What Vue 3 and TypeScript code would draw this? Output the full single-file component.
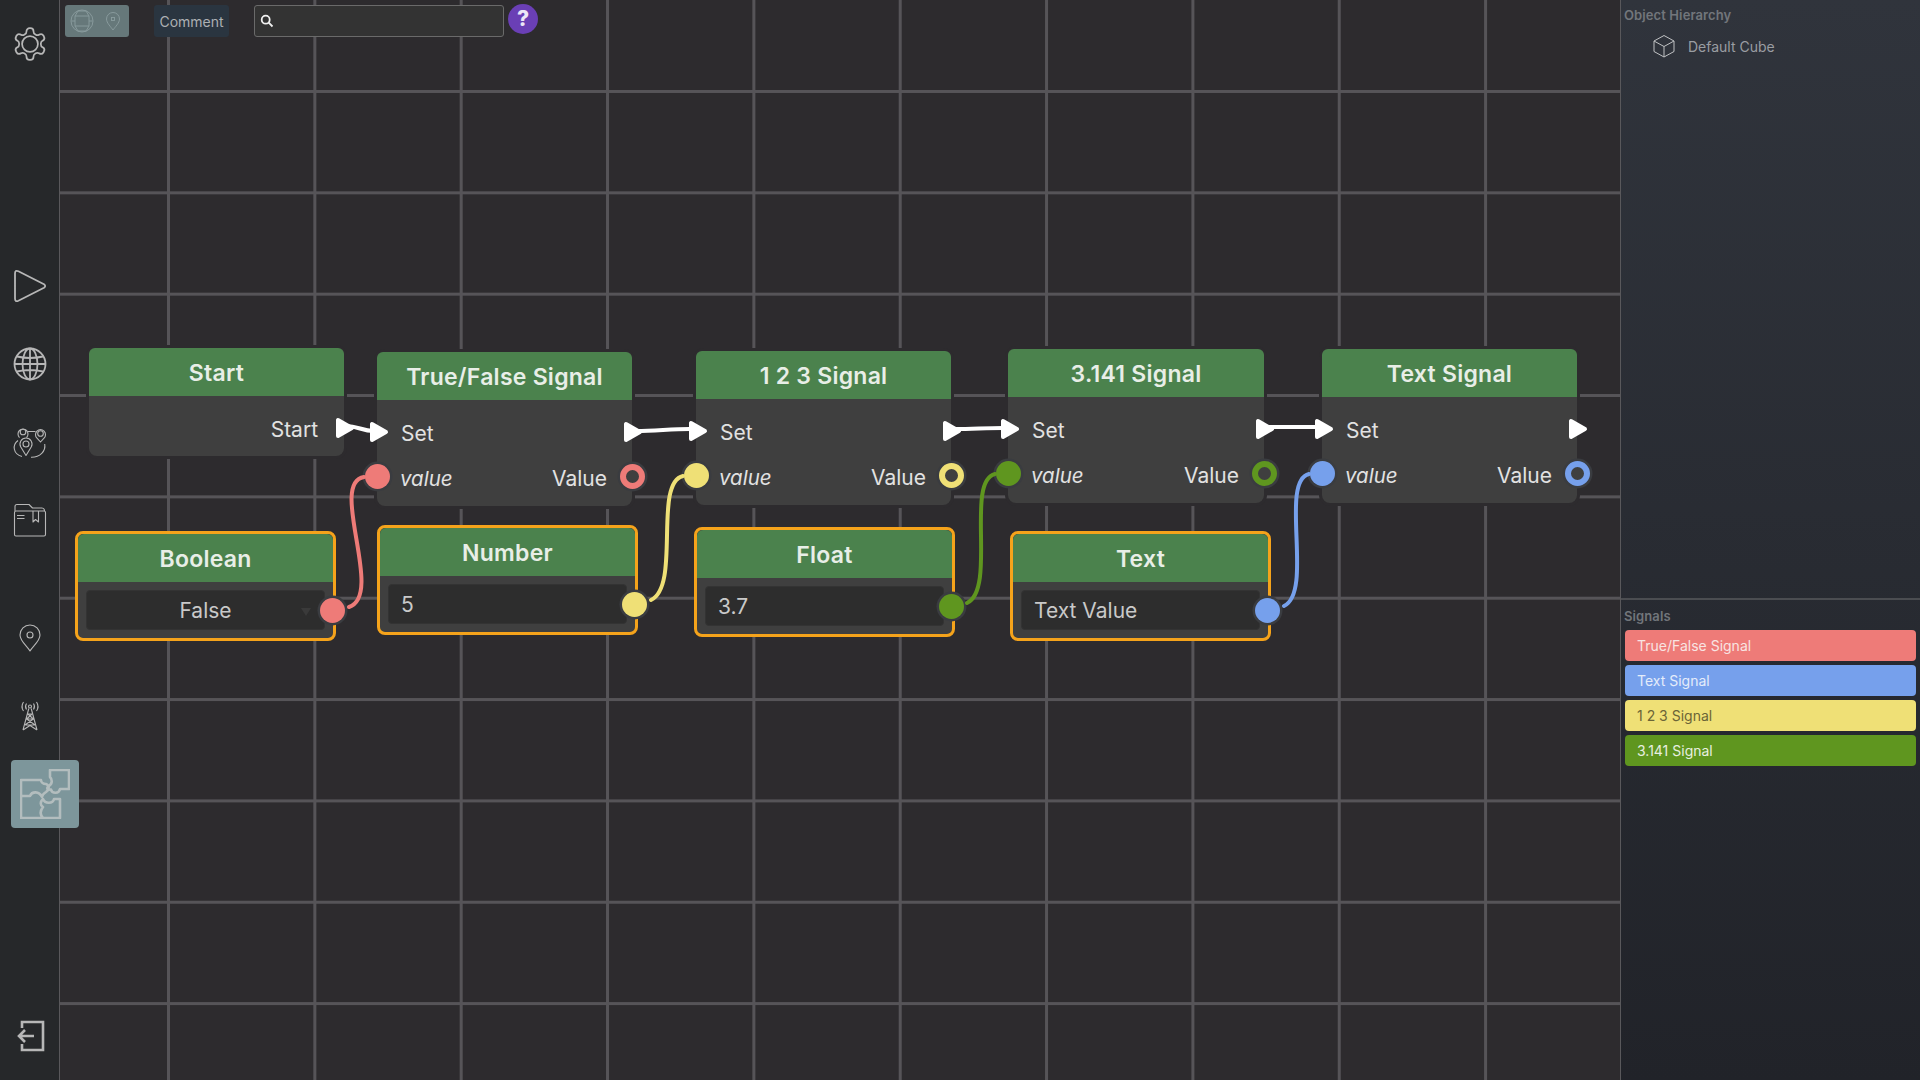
<template>
  <div class="app">
    <aside class="sidebar">
      <div class="slot">
        <svg width="38" height="38" viewBox="0 0 24 24" class="ico thin">
          <path d="M12.22 2h-.44a2 2 0 0 0-2 2v.18a2 2 0 0 1-1 1.73l-.43.25a2 2 0 0 1-2 0l-.15-.08a2 2 0 0 0-2.73.73l-.22.38a2 2 0 0 0 .73 2.73l.15.1a2 2 0 0 1 1 1.72v.51a2 2 0 0 1-1 1.74l-.15.09a2 2 0 0 0-.73 2.73l.22.38a2 2 0 0 0 2.73.73l.15-.08a2 2 0 0 1 2 0l.43.25a2 2 0 0 1 1 1.73V20a2 2 0 0 0 2 2h.44a2 2 0 0 0 2-2v-.18a2 2 0 0 1 1-1.73l.43-.25a2 2 0 0 1 2 0l.15.08a2 2 0 0 0 2.73-.73l.22-.39a2 2 0 0 0-.73-2.73l-.15-.08a2 2 0 0 1-1-1.74v-.5a2 2 0 0 1 1-1.74l.15-.09a2 2 0 0 0 .73-2.73l-.22-.38a2 2 0 0 0-2.73-.73l-.15.08a2 2 0 0 1-2 0l-.43-.25a2 2 0 0 1-1-1.73V4a2 2 0 0 0-2-2z" />
          <circle cx="12" cy="12" r="5" />
        </svg>
      </div>

      <div class="group-mid">
        <div class="slot">
          <svg width="34" height="34" viewBox="0 0 34 34" class="ico">
            <path d="M2 4.5Q2 .8 5.4 2.3L31 15.2Q33.4 17 31 18.8L5.4 31.7Q2 33.2 2 29.5Z" />
          </svg>
        </div>
        <div class="slot">
          <svg width="34" height="34" viewBox="0 0 34 34" class="ico">
            <circle cx="17" cy="17" r="15.5" />
            <ellipse cx="17" cy="17" rx="7.5" ry="15.5" />
            <path d="M17 1.5V32.5M1.5 17H32.5M4 9.5Q17 12.5 30 9.5M4 24.5Q17 21.5 30 24.5" />
          </svg>
        </div>
        <div class="slot">
          <svg width="40" height="40" viewBox="0 0 40 40" class="ico thin">
            <circle cx="13" cy="10" r="2.8" />
            <path d="M9.5 15.6A5 5 0 1 1 16.5 15.6M18 9.5H25.5" />
            <circle cx="30.500" cy="11.500" r="2.800" />
            <path d="M30.500 20L27 16.200A5 5 0 1 1 34 16.200Z" />
            <circle cx="16" cy="22" r="3" />
            <path d="M16 33.500L10.800 25A6 6 0 1 1 21.200 25Z" />
            <path d="M8 18.500C2 23 3 32 12 34.500M21 35.200C30 35.500 36 29 34.700 22" />
          </svg>
        </div>
        <div class="slot">
          <svg width="34" height="34" viewBox="0 0 34 34" class="ico thin">
            <path d="M2 8V3.500Q2 1.500 4 1.500H16L19.500 5H29Q31.500 5 31.500 8" />
            <rect x="1.500" y="8" width="31" height="25" rx="1.500" />
            <path d="M20 8V19L22.500 16.500L25.500 19V8M4 12.500H11.500M4 15.500H11.500" />
          </svg>
        </div>
      </div>

      <div class="group-low">
        <div class="slot">
          <svg width="22" height="28" viewBox="0 0 22 28" class="ico thin">
            <path d="M11 27C8 22 1 17 1 11A10 10 0 0 1 21 11C21 17 14 22 11 27Z" />
            <circle cx="11" cy="11" r="3" />
          </svg>
        </div>
        <div class="slot">
          <svg width="22" height="30" viewBox="0 0 22 30" class="ico thin">
            <circle cx="11" cy="5.500" r="1.500" />
            <path d="M7.500 2.500Q5.500 5.500 7.500 8.500M14.500 2.500Q16.500 5.500 14.500 8.500M4.500 1Q1.500 5.500 4.500 10M17.500 1Q20.500 5.500 17.500 10" />
            <path d="M9.800 7.500L4 29M12.200 7.500L18 29M9 13H13M7.700 18H14.300M6 24H16M9 13L14.300 18L6 24M13 13L7.700 18L16 24M4 29L11 24.500L18 29" />
          </svg>
        </div>
        <div class="slot slot-start">
          <div class="puzzle-tile">
            <svg width="50" height="50" viewBox="0 0 50 50" class="puzzle">
              <path d="M30 1H49V20H40C39 25 32 25 31 20.500C27 21 26 19 29 17C33 14 32 10 30 8Z" />
              <path d="M1 11H21C21 13 23 15 26 15C29 16 30 20 26 23C23 25 22 26 22 28C19 22 12 22 10 27H1ZM1 11V49H40V30H34C33 35 25 35 23 30C20 33 20 36 23 38C20 42 20 46 23 49" />
            </svg>
          </div>
        </div>
      </div>

      <div class="slot slot-exit">
        <svg width="30" height="32" viewBox="0 0 30 32" class="ico exit">
          <path d="M6 8V2H27V30H6V24M18 16H3M9 10L3 16L9 22" />
        </svg>
      </div>
    </aside>

    <main class="canvas">
      <div class="toolbar">
        <div class="tb-tile">
          <svg width="24" height="24" viewBox="0 0 24 24" class="tb-ico">
            <circle cx="12" cy="12" r="11" />
            <path d="M8 2L5 7V17L8 22H16L19 17V7L16 2ZM5 7H19M5 17H19M1.500 12H5M19 12H22.500" />
          </svg>
          <svg width="16" height="20" viewBox="0 0 16 20" class="tb-ico">
            <path d="M8 19C6 16 1.500 12 1.500 8A6.500 6.500 0 0 1 14.500 8C14.500 12 10 16 8 19Z" />
            <rect x="6.500" y="6.500" width="3" height="3" />
          </svg>
        </div>
        <button class="tb-comment">Comment</button>
        <div class="tb-search">
          <svg width="14" height="14" viewBox="0 0 14 14" class="search-ico">
            <circle cx="5.700" cy="5.700" r="4" />
            <path d="M8.700 8.700L12.500 12.500" />
          </svg>
        </div>
        <div class="tb-help">?</div>
      </div>

      <div
        v-for="n in nodes"
        :key="n.title"
        class="node"
        :class="n.value !== undefined ? 'node-value' : 'node-signal'"
        :style="{ left: n.x - 60 + 'px', top: n.y + 'px', width: n.w + 'px' }"
      >
        <div class="node-head">{{ n.title }}</div>

        <div v-if="n.value !== undefined" class="value-body">
          <div class="value-input" :class="{ centered: n.select }">
            {{ n.value }}
            <span v-if="n.select" class="caret"></span>
          </div>
          <span class="sock out-value" :style="{ background: n.color }"></span>
        </div>

        <div v-else-if="n.onlyExec" class="signal-body start-body">
          <div class="row row-end">
            <span>{{ n.title }}</span>
            <svg class="exec exec-out" width="20" height="22" viewBox="0 0 20 22"><path d="M3 3V19L17 11Z" /></svg>
          </div>
        </div>

        <div v-else class="signal-body">
          <div class="row">
            <svg class="exec exec-in" width="20" height="22" viewBox="0 0 20 22"><path d="M3 3V19L17 11Z" /></svg>
            <span>Set</span>
            <svg class="exec exec-out" width="20" height="22" viewBox="0 0 20 22"><path d="M3 3V19L17 11Z" /></svg>
          </div>
          <div class="row row-between">
            <span class="sock sock-in" :style="{ background: n.color }"></span>
            <em>value</em>
            <span>Value</span>
            <span class="sock sock-out" :style="{ borderColor: n.color }"></span>
          </div>
        </div>
      </div>

      <svg class="wires" width="1560" height="1080" viewBox="60 0 1560 1080" fill="none">
        <path v-for="(w, i) in wires" :key="i" :d="wirePath(w)" :stroke="w.color" stroke-width="4" stroke-linecap="round" />
      </svg>
    </main>

    <aside class="panel">
      <section class="panel-top">
        <h4>Object Hierarchy</h4>
        <div class="tree-row">
          <svg width="24" height="24" viewBox="0 0 24 24" class="cube">
            <path d="M12 1.500L22 7V17.500L12 23L2 17.500V7ZM2 7L12 12.500L22 7M12 12.500V23" />
          </svg>
          <span>Default Cube</span>
        </div>
      </section>
      <section class="panel-bottom">
        <h4>Signals</h4>
        <div class="signal-list">
          <div v-for="s in signals" :key="s.name" class="signal-bar" :style="{ background: s.bg, color: s.fg }">{{ s.name }}</div>
        </div>
      </section>
    </aside>
  </div>
</template>

<script setup lang="ts">
interface GraphNode {
  title: string
  x: number
  y: number
  w: number
  color?: string
  value?: string
  select?: boolean
  onlyExec?: boolean
}

interface Wire {
  ax: number
  ay: number
  bx: number
  by: number
  d: number
  lift: number
  color: string
}

const red = "#ee7b78"
const yellow = "#efe076"
const green = "#5f961f"
const blue = "#76a0ec"

const nodes: GraphNode[] = [
  { title: "Start", x: 89, y: 348, w: 255, onlyExec: true },
  { title: "True/False Signal", x: 377, y: 352, w: 255, color: red },
  { title: "1 2 3 Signal", x: 696, y: 351, w: 255, color: yellow },
  { title: "3.141 Signal", x: 1008, y: 349, w: 256, color: green },
  { title: "Text Signal", x: 1322, y: 349, w: 255, color: blue },
  { title: "Boolean", x: 75, y: 531, w: 261, color: red, value: "False", select: true },
  { title: "Number", x: 377, y: 525, w: 261, color: yellow, value: "5" },
  { title: "Float", x: 694, y: 527, w: 261, color: green, value: "3.7" },
  { title: "Text", x: 1010, y: 531, w: 261, color: blue, value: "Text Value" },
]

const wires: Wire[] = [
  { ax: 346, ay: 426, bx: 374, by: 431, d: 12, lift: 0, color: "#fff" },
  { ax: 636, ay: 431, bx: 690, by: 429, d: 20, lift: 0, color: "#fff" },
  { ax: 955, ay: 429, bx: 1003, by: 428, d: 18, lift: 0, color: "#fff" },
  { ax: 1268, ay: 427, bx: 1317, by: 427, d: 18, lift: 0, color: "#fff" },
  { ax: 349, ay: 607, bx: 364, by: 477, d: 36, lift: 12, color: red },
  { ax: 651, ay: 600, bx: 683, by: 476, d: 30, lift: 14, color: yellow },
  { ax: 967, ay: 603, bx: 995, by: 474, d: 30, lift: 14, color: green },
  { ax: 1284, ay: 606, bx: 1309, by: 474, d: 30, lift: 14, color: blue },
]

const signals = [
  { name: "True/False Signal", bg: red, fg: "#f8e4e2" },
  { name: "Text Signal", bg: blue, fg: "#e4ecfa" },
  { name: "1 2 3 Signal", bg: yellow, fg: "#6b6437" },
  { name: "3.141 Signal", bg: green, fg: "#e8efe0" },
]

function wirePath(w: Wire): string {
  return `M${w.ax} ${w.ay}C${w.ax + w.d} ${w.ay - w.lift} ${w.bx - w.d} ${w.by + w.lift / 2} ${w.bx} ${w.by}`
}
</script>

<style>
html,
body {
  margin: 0;
  background: #2d2b2e;
}
</style>

<style scoped>
.app {
  display: flex;
  width: 1920px;
  height: 1080px;
  overflow: hidden;
  font-family: Inter, "Liberation Sans", sans-serif;
}

.sidebar {
  position: relative;
  z-index: 3;
  display: flex;
  flex-direction: column;
  flex: 0 0 59px;
  box-sizing: border-box;
  padding: 5px 0;
  background: #26282a;
  border-right: 1.5px solid #59585b;
}

.slot {
  display: flex;
  align-items: center;
  justify-content: center;
  height: 78px;
  width: 59px;
}

.slot-start {
  justify-content: flex-start;
}

.group-mid {
  margin-top: 164px;
}

.group-low {
  margin-top: 40px;
}

.slot-exit {
  margin-top: auto;
}

.ico {
  fill: none;
  stroke: #b7b7b7;
  stroke-width: 1.8;
  stroke-linejoin: round;
}

.ico.thin {
  stroke-width: 1.1;
}

.exit {
  stroke-width: 2.6;
  stroke-linejoin: miter;
  margin-left: 2px;
}

.puzzle-tile {
  display: flex;
  align-items: center;
  justify-content: center;
  flex: 0 0 68px;
  height: 68px;
  margin-left: 11px;
  background: #7d969b;
  border-radius: 4px;
}

.puzzle {
  fill: none;
  stroke: #b3bdbe;
  stroke-width: 2.6;
  stroke-linejoin: round;
}

.canvas {
  position: relative;
  flex: 1;
  background-color: #2d2b2e;
  background-image:
    linear-gradient(90deg, #565458 3px, transparent 3px),
    linear-gradient(#565458 2.5px, transparent 2.5px);
  background-size: 146.35px 101.35px;
  background-position: 107px 90px;
}

.toolbar {
  position: absolute;
  z-index: 2;
  top: 5px;
  left: 5px;
  display: flex;
  align-items: flex-start;
}

.tb-tile {
  display: flex;
  align-items: center;
  justify-content: space-between;
  box-sizing: border-box;
  width: 64px;
  height: 32px;
  padding: 0 8px 0 5px;
  background: #66787a;
  border-radius: 3px;
}

.tb-ico {
  fill: none;
  stroke: #8b9d9f;
  stroke-width: 0.9;
}

.tb-comment {
  width: 75px;
  height: 32px;
  margin-left: 25px;
  padding: 0;
  border: none;
  border-radius: 3px;
  background: #2a3540;
  color: #adb0b3;
  font: 14px Inter, "Liberation Sans", sans-serif;
}

.tb-search {
  display: flex;
  align-items: center;
  box-sizing: border-box;
  width: 250px;
  height: 32px;
  margin-left: 25px;
  padding-left: 5px;
  background: #333333;
  border: 1px solid #6a6a6a;
  border-radius: 3px;
}

.search-ico {
  fill: none;
  stroke: #f0f0f0;
  stroke-width: 1.8;
}

.tb-help {
  width: 30px;
  height: 30px;
  margin: -1px 0 0 4px;
  border-radius: 50%;
  background: #6a3fb5;
  color: #ece6f7;
  font-size: 21px;
  font-weight: 800;
  line-height: 30px;
  text-align: center;
}

.node {
  position: absolute;
  z-index: 1;
  box-sizing: border-box;
  color: #e2e2e2;
  background: #3f3f3f;
  border-radius: 8px;
}

.node-signal {
  box-shadow: 0 0 0 3px #2d2b2e;
}

.node-value {
  border: 3px solid #f5a31b;
}

.node-head {
  height: 48px;
  line-height: 50px;
  background: #4b824d;
  border-radius: 6px 6px 0 0;
  color: #e8eee7;
  font-size: 23px;
  font-weight: 600;
  letter-spacing: 0.25px;
  text-align: center;
}

.signal-body {
  padding: 11px 0 5px;
  font-size: 21px;
}

.start-body {
  padding: 11px 0 4px;
}

.row {
  position: relative;
  display: flex;
  align-items: center;
  height: 45px;
  padding: 0 25px 0 24px;
}

.row-end {
  justify-content: flex-end;
  padding-right: 26px;
}

.row-between {
  justify-content: space-between;
  padding-right: 25px;
}

.row em {
  font-size: 20.5px;
  font-style: italic;
  margin-left: -1px;
}

.exec {
  position: absolute;
  top: calc(50% - 13px);
  fill: #fff;
  stroke: #fff;
  stroke-width: 4;
  stroke-linejoin: round;
}

.exec-in {
  left: -8px;
}

.exec-out {
  right: -11px;
}

.sock {
  position: absolute;
  box-sizing: border-box;
  width: 25px;
  height: 25px;
  border-radius: 50%;
  box-shadow: 0 0 0 2.5px #3a3c40;
}

.sock-in {
  top: calc(50% - 15px);
  left: -12.5px;
}

.sock-out {
  top: calc(50% - 15px);
  right: -12.5px;
  border: 6.5px solid;
  background: #3f3f3f;
}

.value-body {
  position: relative;
  padding: 8px;
}

.value-input {
  position: relative;
  box-sizing: border-box;
  height: 40px;
  padding: 0 12px;
  line-height: 39px;
  background: #2d2d2d;
  border: 1px solid #333;
  border-radius: 4px;
  color: #c9c9c9;
  font-size: 21px;
}

.value-input.centered {
  text-align: center;
}

.caret {
  position: absolute;
  top: 17px;
  right: 13px;
  border-left: 5px solid transparent;
  border-right: 5px solid transparent;
  border-top: 8px solid #3a3a3a;
}

.out-value {
  top: calc(50% - 12.5px);
  right: -12px;
}

.wires {
  position: absolute;
  z-index: 2;
  top: 0;
  left: 0;
  pointer-events: none;
}

.panel {
  display: flex;
  flex-direction: column;
  flex: 0 0 300px;
  box-sizing: border-box;
  border-left: 1.5px solid #59585b;
  background: linear-gradient(#30343c, #212329);
}

.panel h4 {
  margin: 0;
  color: #72767b;
  font-size: 13px;
  font-weight: 600;
  letter-spacing: 0.1px;
}

.panel-top {
  height: 600px;
  box-sizing: border-box;
  padding: 7px 0 0 3px;
  border-bottom: 2px solid #4b4d51;
}

.tree-row {
  display: flex;
  align-items: center;
  gap: 12px;
  margin: 11px 0 0 28px;
  color: #9a9da2;
  font-size: 14px;
}

.cube {
  fill: none;
  stroke: #c0c2c4;
  stroke-width: 1;
}

.panel-bottom {
  padding: 8px 4px 0 3px;
}

.signal-list {
  display: flex;
  flex-direction: column;
  gap: 4px;
  margin: 6px 0 0 1px;
}

.signal-bar {
  height: 31px;
  padding-left: 12px;
  line-height: 31px;
  border-radius: 4px;
  font-size: 14px;
}
</style>
